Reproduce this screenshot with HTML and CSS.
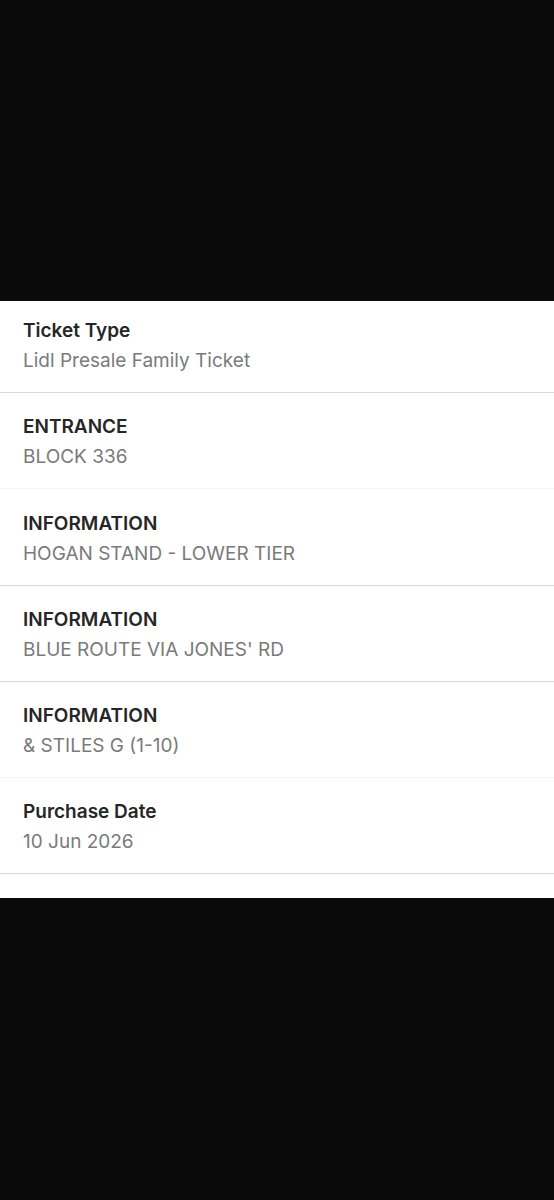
FILE: index.html
```html
<!DOCTYPE html>
<html lang="en">
<head>
    <meta charset="UTF-8">
    <meta name="viewport" content="width=device-width, initial-scale=1.0">
    <title>Ticket Details</title>
    <link rel="stylesheet" href="styles.css">
</head>
<body>
    <!-- Dark area above the sheet -->
    <div class="backdrop top"></div>

    <!-- Ticket details list -->
    <div class="details">
        <div class="row first">
            <div class="label">Ticket Type</div>
            <div class="value">Lidl Presale Family Ticket</div>
        </div>
        <div class="row faint">
            <div class="label">ENTRANCE</div>
            <div class="value">BLOCK 336</div>
        </div>
        <div class="row tall">
            <div class="label">INFORMATION</div>
            <div class="value">HOGAN STAND - LOWER TIER</div>
        </div>
        <div class="row">
            <div class="label">INFORMATION</div>
            <div class="value">BLUE ROUTE VIA JONES' RD</div>
        </div>
        <div class="row faint">
            <div class="label">INFORMATION</div>
            <div class="value">&amp; STILES G (1-10)</div>
        </div>
        <div class="row">
            <div class="label">Purchase Date</div>
            <div class="value">10 Jun 2026</div>
        </div>
        <div class="spacer"></div>
    </div>

    <!-- Dark area below the sheet -->
    <div class="backdrop bottom"></div>
</body>
</html>
```

FILE: styles.css
```css
/* General Styles */
body {
    margin: 0;
    padding: 0;
    background: #0a0a0a;
    font-family: 'Inter', 'Roboto', sans-serif;
}

.backdrop {
    background: #0a0a0a;
}

.backdrop.top {
    height: 301px;
}

.backdrop.bottom {
    height: 302px;
}

/* Details sheet */
.details {
    background: #fff;
}

.row {
    padding: 19px 23px 16px;
    border-bottom: 1px solid #dadada;
    line-height: 30px;
}

.row.first {
    padding-top: 15px;
}

.row.tall {
    padding-top: 20px;
}

.row.faint {
    border-bottom-color: #f4f4f4;
}

.label {
    font-size: 19px;
    font-weight: 600;
    color: #262626;
}

.value {
    font-size: 19px;
    color: #7a7a7a;
}

.spacer {
    height: 24px;
}
```
